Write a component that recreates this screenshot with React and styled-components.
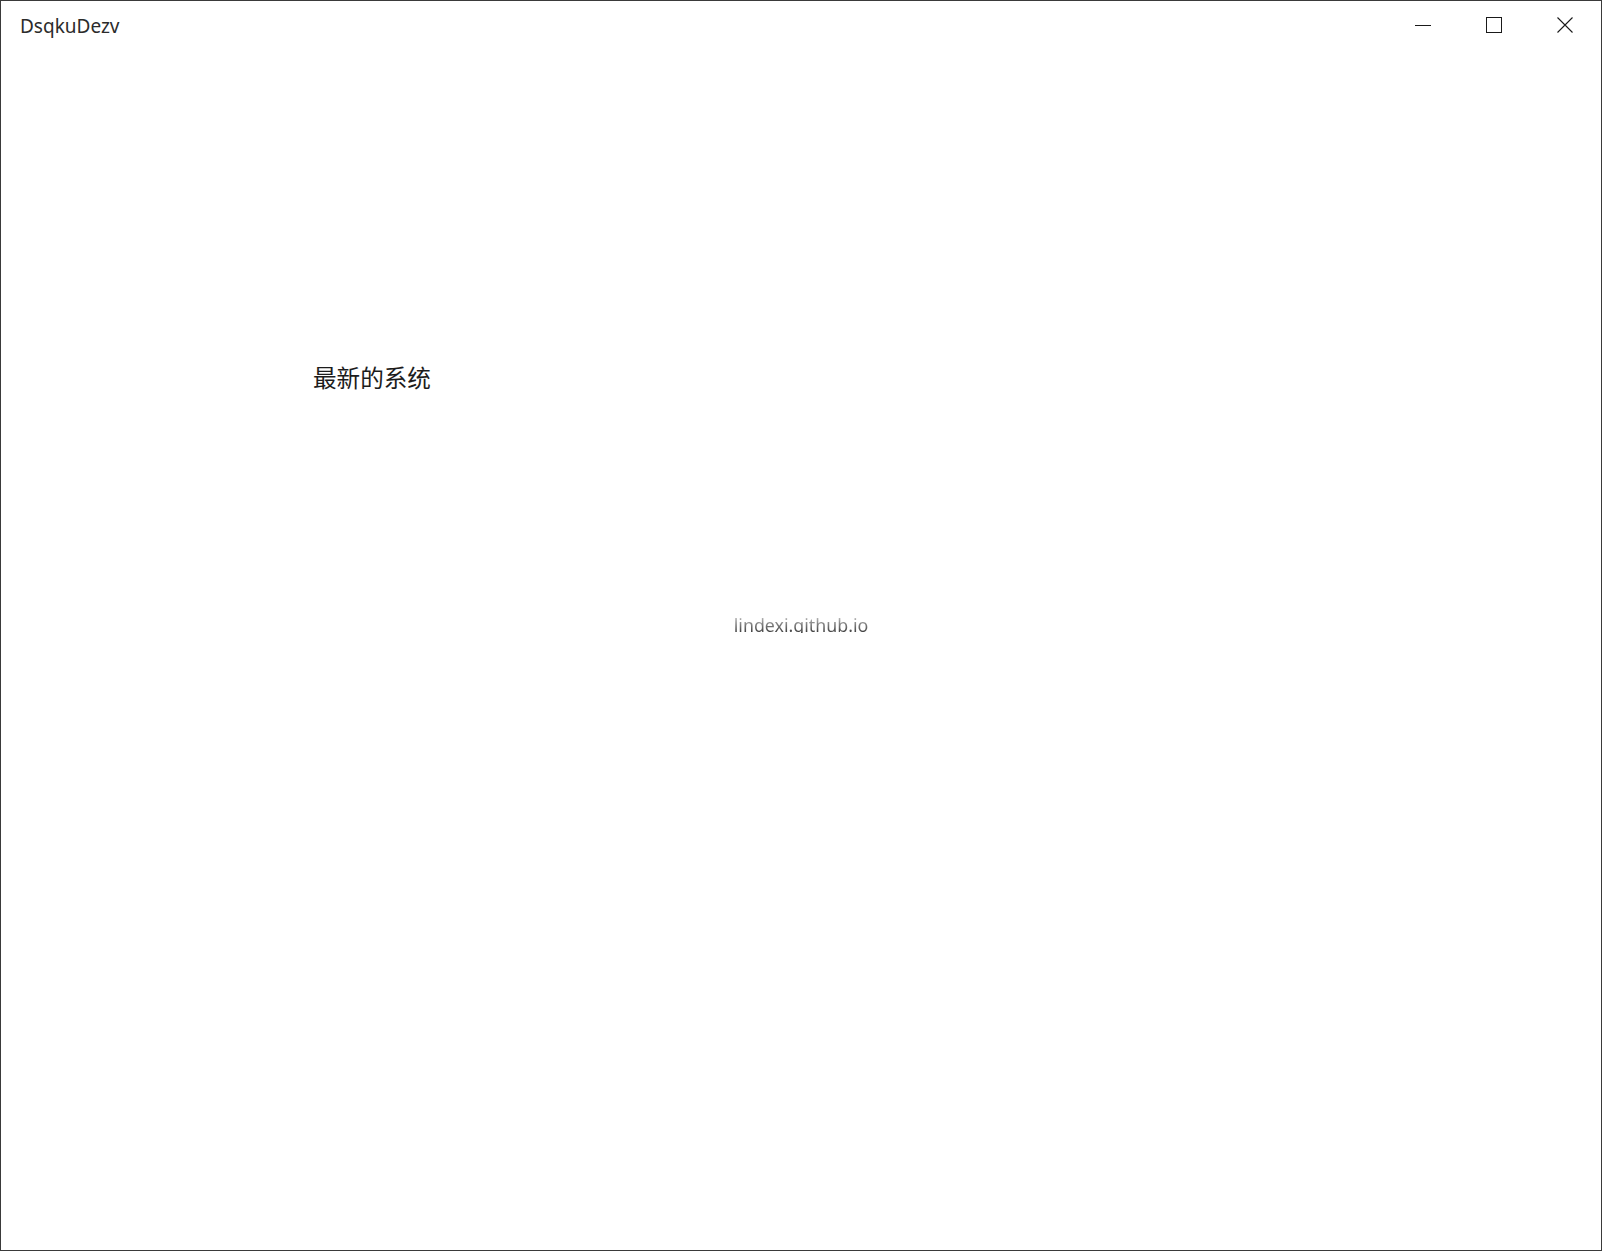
import React from 'react';
import styled, { createGlobalStyle } from 'styled-components';

// 窗口：标题栏 + 内容区

const GlobalStyle = createGlobalStyle`
    html, body {
        margin: 0;
        padding: 0;
        background: #ffffff;
    }
    body {
        font-family: "Noto Sans", "Noto Sans CJK SC", sans-serif;
    }
`;

const Window = styled.div`
    width: 1602px;
    height: 1251px;
    box-sizing: border-box;
    border: 1px solid #3a3a3a;
    background: #ffffff;
    display: flex;
    flex-direction: column;
    overflow: hidden;
`;

const TitleBar = styled.div`
    height: 48px;
    display: flex;
    align-items: center;
    flex-shrink: 0;
    padding-right: 1px;
`;

const Title = styled.div`
    flex: 1;
    padding-left: 19px;
    padding-top: 2px;
    font-size: 19px;
    color: #2b2b2b;
`;

const CaptionButton = styled.div`
    width: 71px;
    height: 48px;
    display: flex;
    align-items: center;
    justify-content: center;
    color: #1a1a1a;
`;

const Content = styled.div`
    flex: 1;
    display: grid;
    grid-template: 1fr / 1fr;
`;

const Heading = styled.div`
    grid-area: 1 / 1;
    align-self: start;
    justify-self: start;
    margin: 312px 0 0 312px;
    font-family: "Noto Sans CJK SC", sans-serif;
    font-size: 23.6px;
    line-height: 32px;
    color: #1c1c1c;
`;

const Link = styled.div`
    grid-area: 1 / 1;
    align-self: start;
    justify-self: center;
    margin-top: 564px;
    height: 20px;
    overflow: hidden;
    font-size: 17.8px;
    line-height: 25px;
    background: linear-gradient(to bottom, #d8d8d8 0%, #9a9a9a 40%, #3a3a3a 100%);
    -webkit-background-clip: text;
    background-clip: text;
    color: transparent;
`;

const MinimizeIcon = () => (
    <svg width="16" height="16" viewBox="0 0 16 16">
        <line x1="0" y1="8.5" x2="16" y2="8.5" stroke="currentColor" strokeWidth="1" />
    </svg>
);

const MaximizeIcon = () => (
    <svg width="16" height="16" viewBox="0 0 16 16">
        <rect x="0.5" y="0.5" width="15" height="15" fill="none" stroke="currentColor" strokeWidth="1" />
    </svg>
);

const CloseIcon = () => (
    <svg width="16" height="16" viewBox="0 0 16 16">
        <path d="M0.5 0.5 L15.5 15.5 M15.5 0.5 L0.5 15.5" stroke="currentColor" strokeWidth="1.1" />
    </svg>
);

const App = () => {
    return (
        <>
            <GlobalStyle />
            <Window>
                <TitleBar>
                    <Title>DsqkuDezv</Title>
                    <CaptionButton><MinimizeIcon /></CaptionButton>
                    <CaptionButton><MaximizeIcon /></CaptionButton>
                    <CaptionButton><CloseIcon /></CaptionButton>
                </TitleBar>
                <Content>
                    <Heading>最新的系统</Heading>
                    <Link>lindexi.github.io</Link>
                </Content>
            </Window>
        </>
    );
};

export default App;
